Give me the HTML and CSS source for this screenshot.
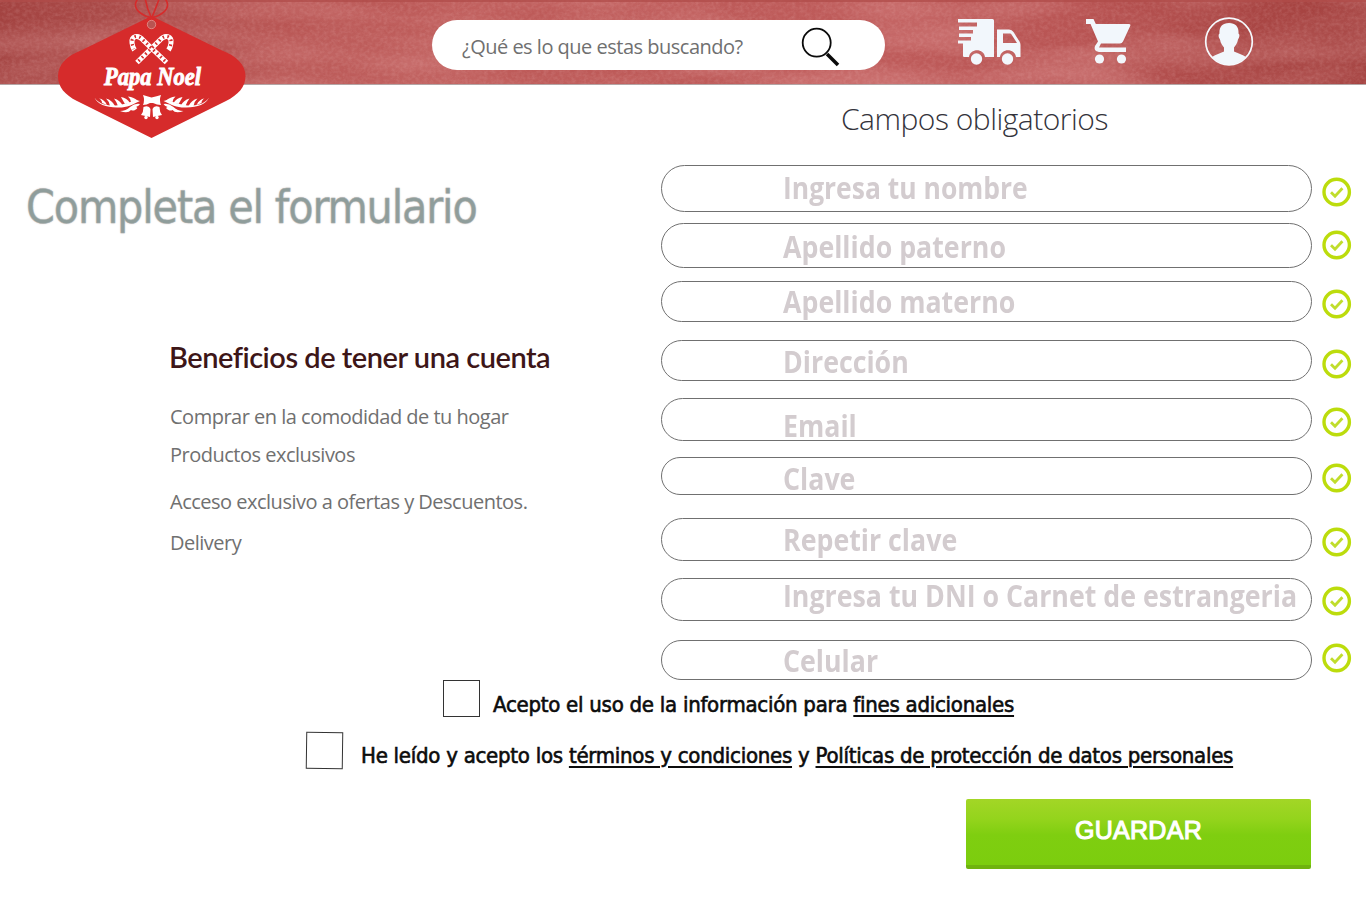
FILE: index.html
```html
<!DOCTYPE html>
<html lang="es">
<head>
<meta charset="utf-8">
<title>Papa Noel</title>
<link rel="stylesheet" href="styles.css">
</head>
<body>
<svg class="defs" width="0" height="0">
  <symbol id="check" viewBox="0 0 30 30">
    <circle cx="14.700" cy="15" r="12.700" fill="none" stroke="#bcdc0c" stroke-width="3.400"/>
    <path d="M9 15.300l4 4 7.400-8" fill="none" stroke="#c0dd2c" stroke-width="2.800"/>
  </symbol>
</svg>
<header class="topbar">
  <svg class="texture" width="1366" height="84">
    <filter id="grain" x="0" y="0" width="100%" height="100%">
      <feTurbulence type="fractalNoise" baseFrequency="0.25 0.3" numOctaves="3" seed="4"/>
      <feColorMatrix values="0 0 0 0 1  0 0 0 0 .75  0 0 0 0 .75  .9 0 0 0 -.32"/>
    </filter>
    <filter id="streaks" x="0" y="0" width="100%" height="100%">
      <feTurbulence type="fractalNoise" baseFrequency="0.006 0.03" numOctaves="2" seed="9"/>
      <feColorMatrix values="0 0 0 0 .92  0 0 0 0 .5  0 0 0 0 .5  1.600 0 0 0 -.6"/>
    </filter>
    <rect width="1366" height="84" filter="url(#streaks)" opacity=".35"/>
    <rect width="1366" height="84" filter="url(#grain)" opacity=".28"/>
    <path d="M0 1H1366" stroke="#b04c4a" stroke-width="1.500"/>
  </svg>
  <svg class="logo" width="190" height="140" viewBox="57 0 190 140">
    <g fill="none" stroke="#d62b2b" stroke-width="1.600">
      <path d="M150.500 17.500C142 16 135 10 135.500 4C136 1 138-2 141-4M145-3C146 4 148 11 151.500 18"/>
      <path d="M152.500 17.500C161 16 168 10 167.500 4C167 1 165-2 162-4M160-3C157 4 155 11 151.500 18"/>
    </g>
    <path fill="#d62b2b" fill-rule="evenodd" d="M151.500 16L221 50C237 56 245.500 65 245.500 76C245.500 87 238 95 226 101L151.500 138L77 101C65 95 58 87 58 76C58 65 66 56 82 50Z"/>
    <circle cx="151.500" cy="24.500" r="4.200" fill="#b95452" stroke="#e9a09c" stroke-width=".7"/>
    <g fill="none" stroke="#fff" stroke-width="5">
      <path d="M166.500 62.500L143 40C138 34 131 36 132 43Q132.500 47 134.500 50"/>
      <path d="M137 62.500L160 40C165 34 172 36 171 43Q170.500 47 168.500 50"/>
    </g>
    <g fill="none" stroke="#d62b2b" stroke-width="3.200" stroke-dasharray="1.600 3.200">
      <path d="M165 61L143 40C138 34 131 36 132 43Q132.500 46 134 49"/>
      <path d="M138.500 61L160 40C165 34 172 36 171 43Q170.500 46 169 49"/>
    </g>
    <text class="logo-text" x="104" y="85" textLength="97" lengthAdjust="spacingAndGlyphs">Papa Noel</text>
    <g id="sprig" fill="#fff">
      <path d="M94.500 97.500C98 103 104 105 111 105.500C120 106 128 103 136 100L140 101C132 105 126 108 117 107.500C106 107.500 97 104 94.500 97.500Z"/>
      <path d="M102 103Q102 100 99 98.500Q104 99 107 105ZM110 106Q109 101 106 98.500Q112 100 115 106ZM118 106Q116 101 114 98.500Q120 100 123 106ZM125 104Q122 99 121 97Q127 98 130 103ZM131 102Q130 98 128 96.500Q134 97 138 101Z"/>
      <path d="M120 111Q126 111 130 107Q135 103 140 104Q139 106 136 107Q139 108 135 110Q133 111 131 110Q128 114 120 111Z"/>
    </g>
    <use href="#sprig" transform="matrix(-1 0 0 1 303.500 0)"/>
    <g fill="#fff">
      <path d="M151.500 97.500Q147 96 143 95Q145 100 143 105Q147 105 150 103L153 103Q157 105 161 105Q159 100 161 95Q157 96 151.500 97.500Z"/>
      <path d="M143.500 107Q149 105 150.500 109L150 117L141 115Q143.500 112 143.500 107ZM159.500 107Q154 105 152.500 109L153 117L162 115Q159.500 112 159.500 107Z"/>
      <circle cx="146" cy="117.500" r="1.700"/><circle cx="157" cy="117.500" r="1.700"/>
    </g>
  </svg>
  <div class="search">
    <span class="search-text">¿Qué es lo que estas buscando?</span>
    <svg class="lens" width="40" height="40" viewBox="0 0 40 40" fill="none" stroke="#0a0a0a">
      <circle cx="15.700" cy="15.700" r="14" stroke-width="1.800"/>
      <path d="M26 27L37 38" stroke-width="3.600"/>
    </svg>
  </div>
  <svg class="truck" width="64" height="48" viewBox="0 0 64 48" fill="#f2f7fc">
    <path d="M0 1H34.500Q36 1 36 2.500V39H27C26 30 12 30 11 39H6Q5 39 5 37.500V25.500H0V22.500H13V19H1V15.500H15V12H1V8.500H19V4.500H0Z"/>
    <path fill-rule="evenodd" d="M39 11.500H51Q54 11.500 55.500 14L61.500 23.500Q62.500 25 62.500 27V39H58C57 30 43 30 42 39H39ZM45 15.500V25H59L53.500 16.500Q53 15.500 52 15.500Z"/>
    <circle cx="18.500" cy="41" r="5.700"/><circle cx="49.500" cy="41" r="5.700"/>
  </svg>
  <svg class="cart" width="46" height="46" viewBox="0 0 46 46" fill="#f2f7fc">
    <path d="M0 0H7.500L9.800 5H43Q45 5 44.200 7L37 22.500Q36 24.500 34 24.500H15L13 28.500H40V33H13Q7 32 9 27L12 22.500L4.500 5H0Z"/>
    <circle cx="13.500" cy="40" r="4.600"/><circle cx="35.500" cy="40" r="4.600"/>
  </svg>
  <svg class="user" width="50" height="50" viewBox="0 0 50 50">
    <circle cx="25" cy="25.500" r="23.300" fill="none" stroke="#f5f9fd" stroke-width="1.700"/>
    <path fill="#f2f7fc" d="M25 7C32 7 35 11.500 34.500 17.500C36 18.500 35.500 21.500 34 23.500C33.500 27.500 31 30 30 31.500V35.500C34 37.500 38 38 42 41A23.500 23.500 0 0 1 8 41C12 38 16 37.500 20 35.500V31.500C19 30 16.500 27.500 16 23.500C14.500 21.500 14 18.500 15.500 17.500C15 11.500 18 7 25 7Z"/>
  </svg>
</header>
<main class="content">
  <section class="intro">
    <h1 class="title">Completa el formulario</h1>
    <h2 class="benefits-title">Beneficios de tener una cuenta</h2>
    <ul class="benefits">
      <li class="b1">Comprar en la comodidad de tu hogar</li>
      <li class="b2">Productos exclusivos</li>
      <li class="b3">Acceso exclusivo a ofertas y Descuentos.</li>
      <li class="b4">Delivery</li>
    </ul>
  </section>
  <section class="form">
    <h3 class="form-title">Campos obligatorios</h3>
    <div class="row r1"><div class="field"><span>Ingresa tu nombre</span></div><svg class="check"><use href="#check"/></svg></div>
    <div class="row r2"><div class="field"><span>Apellido paterno</span></div><svg class="check"><use href="#check"/></svg></div>
    <div class="row r3"><div class="field"><span>Apellido materno</span></div><svg class="check"><use href="#check"/></svg></div>
    <div class="row r4"><div class="field"><span>Dirección</span></div><svg class="check"><use href="#check"/></svg></div>
    <div class="row r5"><div class="field"><span>Email</span></div><svg class="check"><use href="#check"/></svg></div>
    <div class="row r6"><div class="field"><span>Clave</span></div><svg class="check"><use href="#check"/></svg></div>
    <div class="row r7"><div class="field"><span>Repetir clave</span></div><svg class="check"><use href="#check"/></svg></div>
    <div class="row r8"><div class="field"><span>Ingresa tu DNI o Carnet de estrangeria</span></div><svg class="check"><use href="#check"/></svg></div>
    <div class="row r9"><div class="field"><span>Celular</span></div><svg class="check"><use href="#check"/></svg></div>
  </section>
</main>
<div class="consent first"><i class="box"></i><p class="consent-text">Acepto el uso de la información para <u>fines adicionales</u></p></div>
<div class="consent second"><i class="box tilted"></i><p class="consent-text">He leído y acepto los <u>términos y condiciones</u> y <u>Políticas de protección de datos personales</u></p></div>
<button class="save">GUARDAR</button>
</body>
</html>
```
FILE: styles.css
```css
* { box-sizing: border-box; margin: 0; padding: 0; }
body { width: 1366px; height: 922px; overflow: hidden; background: #fff; font-family: "Open Sans", sans-serif; }
.defs { position: absolute; }
svg { display: block; flex: none; }
h1, h2, h3, p, span, li { white-space: nowrap; }

.topbar {
  position: relative; display: flex; align-items: flex-start; height: 85px;
  border-bottom: 1px solid #b4a5a5;
  background: linear-gradient(90deg, #a34341 0, #aa4a48 100px, #b75452 270px, #bd5a58 480px, #be5b5a 900px, #b85453 1080px, #a84543 1270px, #a44240 1366px);
}
.texture { position: absolute; left: 0; top: 0; }
.logo { position: relative; margin-left: 57px; }
.logo-text { font: italic bold 25px "Liberation Serif", serif; fill: #fff; stroke: #fff; stroke-width: .9px; }
.search { position: relative; display: flex; width: 453px; height: 50px; margin: 20px 0 0 185px; border-radius: 25px; background: #fff; }
.search-text { margin-left: 30px; font-size: 20px; line-height: 53px; color: #707070; width: 339px; letter-spacing: -.5px; }
.lens { margin-top: 7px; }
.truck { position: relative; margin: 18px 0 0 73px; }
.cart { position: relative; margin: 19px 0 0 64px; }
.user { position: relative; margin: 16px 0 0 72px; }

.content { display: flex; height: 595px; }
.intro { width: 661px; }
.title { margin: 92px 0 0 26px; font: 400 46px/60px "DejaVu Sans Condensed", "DejaVu Sans", sans-serif; font-stretch: condensed; color: #8f9d9b; letter-spacing: -1.15px; -webkit-text-stroke: .4px #a9aeac; text-shadow: 0 0 2px #cfc4c4; }
.benefits-title { margin: 100px 0 0 169px; font: 600 29px/40px Lato, sans-serif; color: #3d1618; letter-spacing: -.48px; }
.benefits { margin: 26px 0 0 170px; list-style: none; font-size: 20px; line-height: 28px; color: #707070; letter-spacing: -.5px; }
.b2 { margin-top: 10px; }
.b3 { margin-top: 19px; }
.b4 { margin-top: 13px; }

.form { width: 705px; }
.form-title { margin: 14px 0 0 180px; font-weight: 300; font-size: 30px; line-height: 40px; color: #33333b; letter-spacing: -.5px; }
.row { display: flex; }
.field { width: 651px; height: 100%; border: 1px solid #707070; border-radius: 24px; padding-left: 121px; font-size: 30px; font-weight: 700; line-height: 32px; color: #d3cccf; }
.field span { display: inline-block; transform: scaleX(.892); transform-origin: 0 50%; }
.r1 .field span { transform: scaleX(.882); }
.check { width: 30px; height: 30px; margin-left: 10px; }
.r1 { margin-top: 26px; height: 47px; }
.r2 { margin-top: 11px; height: 45px; }
.r3 { margin-top: 13px; height: 41px; }
.r4 { margin-top: 18px; height: 41px; }
.r5 { margin-top: 17px; height: 43px; }
.r6 { margin-top: 16px; height: 38px; }
.r7 { margin-top: 23px; height: 43px; }
.r8 { margin-top: 17px; height: 43px; }
.r9 { margin-top: 19px; height: 40px; }
.r1 .field { padding-top: 6px; }
.r2 .field { padding-top: 7px; }
.r3 .field { padding-top: 4px; }
.r4 .field { padding-top: 5px; }
.r5 .field { padding-top: 11px; }
.r6 .field { padding-top: 5px; }
.r7 .field { padding-top: 5px; }
.r8 .field { padding-top: 1px; }
.r9 .field { padding-top: 4px; }
.r1 .check { margin-top: 12px; }
.r2 .check { margin-top: 7px; }
.r3 .check { margin-top: 8px; }
.r4 .check { margin-top: 9px; }
.r5 .check { margin-top: 9px; }
.r6 .check { margin-top: 6px; }
.r7 .check { margin-top: 9px; }
.r8 .check { margin-top: 8px; }
.r9 .check { margin-top: 3px; }

.consent { display: flex; }
.first { padding-left: 443px; height: 51px; }
.second { padding-left: 306px; height: 68px; }
.box { width: 37px; height: 37px; border: 1px solid #333; background: #fff; }
.tilted { transform: rotate(.8deg); margin-top: 1px; }
.consent-text { margin-left: 13px; font: 400 22px/50px "DejaVu Sans Condensed", "DejaVu Sans", sans-serif; font-stretch: condensed; color: #0c0c0c; letter-spacing: -.26px; -webkit-text-stroke: .6px #0c0c0c; }
.second .consent-text { margin-left: 18px; }
.consent-text u { text-decoration-thickness: 2px; text-underline-offset: 3px; }

.save { display: block; width: 345px; height: 70px; margin-left: 966px; border: 0; border-bottom: 4px solid #6fb30e; border-radius: 2px; padding-bottom: 4px; background: linear-gradient(#a3d626 0, #94d41c 20px, #7fce10 36px, #7ccd0e 100%); color: #fff; font: 400 25px/60px "Liberation Sans", sans-serif; letter-spacing: .3px; -webkit-text-stroke: 1.1px #fff; }
```
